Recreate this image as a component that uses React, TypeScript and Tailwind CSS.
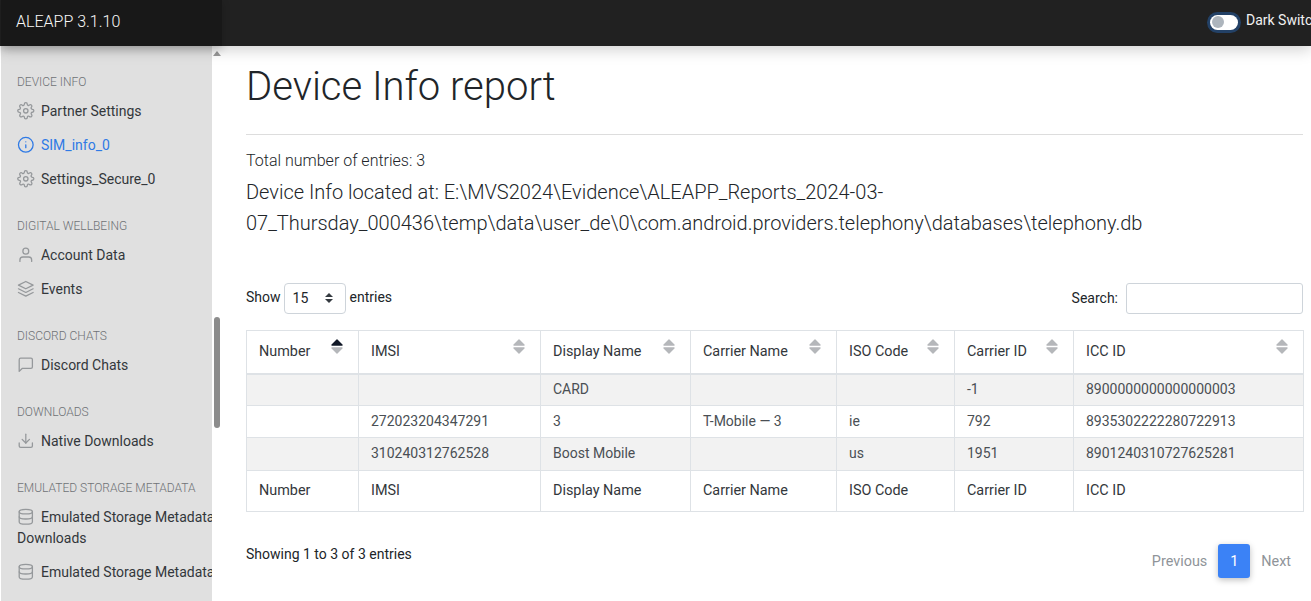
import React from "react";
import { FiSettings, FiInfo, FiUser, FiLayers, FiMessageSquare, FiDownload, FiDatabase } from "react-icons/fi";

type Item = { label: React.ReactNode; Icon: any; active?: boolean };
const groups: { title: string; cls: string; items: Item[] }[] = [
  { title: "DEVICE INFO", cls: "mt-0", items: [
    { label: "Partner Settings", Icon: FiSettings },
    { label: "SIM_info_0", Icon: FiInfo, active: true },
    { label: "Settings_Secure_0", Icon: FiSettings },
  ]},
  { title: "DIGITAL WELLBEING", cls: "mt-[18px]", items: [
    { label: "Account Data", Icon: FiUser },
    { label: "Events", Icon: FiLayers },
  ]},
  { title: "DISCORD CHATS", cls: "mt-[18px]", items: [{ label: "Discord Chats", Icon: FiMessageSquare }]},
  { title: "DOWNLOADS", cls: "mt-[18px]", items: [{ label: "Native Downloads", Icon: FiDownload }]},
  { title: "EMULATED STORAGE METADATA", cls: "mt-[18px]", items: [
    { label: "Emulated Storage Metadata Downloads", Icon: FiDatabase },
    { label: "Emulated Storage Metadata", Icon: FiDatabase },
  ]},
];

const cols = [
  ["Number", 112], ["IMSI", 182], ["Display Name", 150], ["Carrier Name", 146],
  ["ISO Code", 118], ["Carrier ID", 119], ["ICC ID", 230],
] as const;

const rows = [
  { h: "h-[32px] bg-[#f2f2f2]", d: "", c: ["", "", "CARD", "", "", "-1", "8900000000000000003"] },
  { h: "h-[32px] bg-white", d: "", c: ["", "272023204347291", "3", "T-Mobile — 3", "ie", "792", "8935302222280722913"] },
  { h: "h-[33px] bg-[#f2f2f2]", d: "pb-[2px]", c: ["", "310240312762528", "Boost Mobile", "", "us", "1951", "8901240310727625281"] },
];

function SortIcon({ active }: { active?: boolean }) {
  return (
    <svg width="12" height="15" viewBox="0 0 12 15" className="absolute right-[15px] top-[8px]">
      <path d="M6 1 L11 6 L1 6 Z" fill={active ? "#111827" : "#b5b7ba"} stroke={active ? "#111827" : "#b5b7ba"} strokeWidth="1.4" strokeLinejoin="round" />
      <path d="M6 14 L11 9 L1 9 Z" fill="#b5b7ba" stroke="#b5b7ba" strokeWidth="1.4" strokeLinejoin="round" />
    </svg>
  );
}

export default function App() {
  return (
    <div className="relative h-[601px] w-[1311px] overflow-hidden bg-white font-['Roboto',sans-serif] text-[14px] text-[#212529]">
      <header className="relative z-20 flex h-[46px] items-center bg-[#212121] shadow-[0_4px_14px_rgba(0,0,0,0.18)]">
        <div className="ml-px flex h-[46px] w-[221px] items-center bg-[#181818] pb-[2px] pl-[15px] text-[16px] font-light text-[#f8f8f8] shadow-[0_3px_8px_rgba(0,0,0,0.2)]">
          ALEAPP 3.1.10
        </div>
        <div className="ml-auto flex shrink-0 items-center whitespace-nowrap pb-[5px]">
          <span className="relative mr-[8px] mt-[3px] block h-[15px] w-[28px] rounded-full bg-white shadow-[0_0_0_3px_rgba(38,92,160,0.55)]">
            <span className="absolute left-[2px] top-[1.5px] h-[12px] w-[12px] rounded-full bg-[#adb5bd]" />
          </span>
          <span className="w-[65px] overflow-hidden text-[14px] text-[#f1f1f1]">Dark Switch</span>
        </div>
      </header>

      <div className="flex h-[555px]">
        <aside className="relative ml-px flex w-[211px] shrink-0 flex-col overflow-hidden bg-[#e0e0e0] pt-[25px]">
          {groups.map((g) => (
            <div key={g.title} className={g.cls}>
              <h6 className="mb-[2px] whitespace-nowrap pl-[16px] text-[12px] font-light leading-[22px] text-[#6f7276]">{g.title}</h6>
              {g.items.map((it, i) => (
                <a key={i} className={`block w-[250px] pb-[7px] pl-[16px] pr-[26px] pt-[6px] text-[14px] leading-[21px] ${it.active ? "text-[#2f7ae5]" : "text-[#33373b]"}`}>
                  <it.Icon className={`mr-[6.4px] inline-block h-[17.6px] w-[17.6px] align-[-4px] ${it.active ? "text-[#2f7ae5]" : "text-[#95989b]"}`} strokeWidth={1.75} />
                  {it.label}
                </a>
              ))}
            </div>
          ))}
        </aside>

        <div className="relative w-[11px] shrink-0">
          <svg width="8" height="5" viewBox="0 0 8 5" className="absolute left-[1px] top-[5px]"><path d="M4 0 L8 5 L0 5 Z" fill="#9a9a9a" /></svg>
          <div className="absolute left-[2px] top-[271px] h-[111px] w-[6px] rounded-[3px] bg-[#8c8c8c]" />
        </div>

        <main className="w-[1080px] shrink-0 pl-[23px]">
          <h1 className="mt-[17px] text-[40px] font-light leading-[48px] text-[#212529]">Device Info report</h1>
          <hr className="mt-[23px] border-[#dddddd]" />
          <p className="mt-[14px] text-[16px] font-light leading-[24px]">Total number of entries: 3</p>
          <p className="mt-[4px] text-[20px] font-light leading-[31px]">
            Device Info located at: E:\MVS2024\Evidence\ALEAPP_Reports_2024-03-<br />
            07_Thursday_000436\temp\data\user_de\0\com.android.providers.telephony\databases\telephony.db
          </p>

          <div className="mt-[43px] flex h-[32px] items-center justify-between">
            <div className="flex items-center">
              <span className="-mt-[2px]">Show</span>
              <span className="ml-[3px] mr-[4px] flex h-[31px] w-[62px] items-center justify-between rounded-[4px] border border-[#ced4da] pl-[8px] pr-[12px]">
                15
                <svg width="8" height="12" viewBox="0 0 8 12"><path d="M4 1 L8 5 L0 5 Z M4 11 L8 7 L0 7 Z" fill="#343a40" /></svg>
              </span>
              <span className="-mt-[2px]">entries</span>
            </div>
            <div className="flex items-center">
              <span>Search:</span>
              <span className="ml-[8px] block h-[31px] w-[177px] rounded-[3px] border border-[#ced4da]" />
            </div>
          </div>

          <table className="mt-[16px] w-[1057px] table-fixed border-collapse">
            <colgroup>{cols.map(([n, w]) => <col key={n} style={{ width: w }} />)}</colgroup>
            <thead>
              <tr className="h-[43px]">
                {cols.map(([n], i) => (
                  <th key={n} className="relative border border-b-2 border-[#dee2e6] px-[12px] text-left text-[14.4px] font-normal text-[#33373b]">
                    {n}
                    <SortIcon active={i === 0} />
                  </th>
                ))}
              </tr>
            </thead>
            <tbody>
              {rows.map((r, ri) => (
                <tr key={ri} className={r.h}>
                  {r.c.map((c, ci) => <td key={ci} className={`border border-[#dee2e6] px-[12px] text-[#4a4f54] ${r.d}`}>{c}</td>)}
                </tr>
              ))}
            </tbody>
            <tfoot>
              <tr className="h-[41px]">
                {cols.map(([n]) => <th key={n} className="border border-[#dee2e6] px-[12px] text-left text-[14.4px] font-normal text-[#33373b]">{n}</th>)}
              </tr>
            </tfoot>
          </table>

          <div className="mt-[32px] flex items-start justify-between">
            <span className="leading-[21px]">Showing 1 to 3 of 3 entries</span>
            <div className="flex items-center text-[14.4px] text-[#8f9499]">
              <span className="px-[11px] pt-[2px]">Previous</span>
              <span className="flex h-[34px] w-[32px] items-center justify-center rounded-[3px] bg-[#3b82f6] pt-[2px] text-white shadow-[0_2px_6px_rgba(0,0,0,0.25)]">1</span>
              <span className="pl-[11px] pr-[12px] pt-[2px]">Next</span>
            </div>
          </div>
        </main>
      </div>
    </div>
  );
}
